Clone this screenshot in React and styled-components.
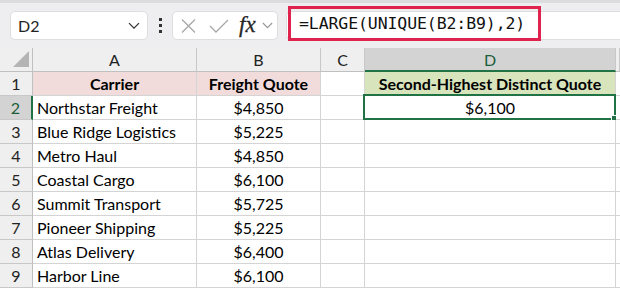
import React from 'react'
import styled, { createGlobalStyle } from 'styled-components'

const Global = createGlobalStyle`
    body {
        margin: 0;
        background: #ffffff;
        font-family: Lato, "Open Sans", sans-serif;
    }
`

const Page = styled.div`
    width: 620px;
    height: 289px;
    overflow: hidden;
    background: #ffffff;
`

const FormulaBar = styled.div`
    display: flex;
    align-items: center;
    height: 48px;
    padding: 3px 0 0 10px;
    background: #eeeef0;
    border-top: 3px solid #dcdcde;
    box-sizing: border-box;
`

const Box = styled.div`
    display: flex;
    align-items: center;
    height: 29px;
    background: #ffffff;
    border: 1px solid #dedede;
    border-radius: 5px;
    box-sizing: border-box;
    margin-top: -3px;
`

const NameBox = styled(Box)`
    width: 138px;
    padding: 0 7px 0 7px;
    justify-content: space-between;
    font-size: 16px;
    color: #222;
`

const Dots = styled.div`
    display: flex;
    flex-direction: column;
    gap: 3px;
    margin: -3px 10px 0 11px;

    span {
        display: block;
        width: 3px;
        height: 3px;
        background: #333;
    }
`

const FxBox = styled(Box)`
    width: 106px;
    padding: 0 0 0 8px;
`

const Fx = styled.span`
    font-family: "Liberation Serif", serif;
    font-style: italic;
    font-size: 23px;
    line-height: 1;
    color: #262626;
    margin: -3px 6px 0 10px;
    -webkit-text-stroke: 0.3px #262626;
`

const FormulaBox = styled(Box)`
    flex: 1;
    margin-left: 8px;
    border-radius: 5px 0 0 5px;
    border-right: none;
    position: relative;
`

const Highlight = styled.div`
    position: absolute;
    left: 1px;
    top: -6px;
    width: 253px;
    height: 35px;
    border: 3px solid #e0234e;
    box-sizing: border-box;
    display: flex;
    align-items: center;
    padding-left: 8px;
    font-family: "DejaVu Sans Mono", monospace;
    font-size: 16.5px;
    color: #111;
    letter-spacing: -0.1px;
`

const Grid = styled.div`
    display: grid;
    grid-template-columns: 33px 164px 124px 44px 251px 4px;
    grid-auto-rows: 24px;
`

const Cell = styled.div`
    box-sizing: border-box;
    border-right: 1px solid #d4d4d4;
    border-bottom: 1px solid #d4d4d4;
    display: flex;
    align-items: center;
    justify-content: ${p => p.$align || 'flex-start'};
    padding: 0 ${p => (p.$align ? '0' : '4px')};
    font-size: 16px;
    color: #000;
    background: ${p => p.$fill || '#ffffff'};
    font-weight: ${p => (p.$bold ? 700 : 400)};
    white-space: nowrap;
    position: relative;
`

const ColHead = styled.div`
    box-sizing: border-box;
    display: flex;
    align-items: center;
    justify-content: center;
    border-right: 1px solid #c8c8c8;
    border-bottom: ${p => (p.$active ? '2px solid #217346' : '1px solid #c0c0c0')};
    background: ${p => (p.$active ? '#d3d3d3' : '#efefef')};
    color: ${p => (p.$active ? '#1b5e38' : '#222')};
    font-size: 16px;
`

const RowHead = styled.div`
    box-sizing: border-box;
    display: flex;
    align-items: center;
    justify-content: center;
    border-bottom: 1px solid #c8c8c8;
    border-right: ${p => (p.$active ? '2px solid #217346' : '1px solid #c0c0c0')};
    background: ${p => (p.$active ? '#d3d3d3' : '#efefef')};
    color: ${p => (p.$active ? '#1b5e38' : '#222')};
    font-size: 16px;
`

const Corner = styled.div`
    box-sizing: border-box;
    background: #efefef;
    border-right: 1px solid #c0c0c0;
    border-bottom: 1px solid #c0c0c0;
    display: flex;
    align-items: flex-end;
    justify-content: flex-end;
    padding: 0 3px 4px 0;
`

const Selected = styled.div`
    position: absolute;
    inset: -2px -1px -1px -2px;
    border: 2px solid #217346;
    pointer-events: none;

    &::after {
        content: '';
        position: absolute;
        right: -4px;
        bottom: -4px;
        width: 5px;
        height: 5px;
        background: #217346;
        border: 1px solid #fff;
    }
`

const Chevron = ({ color = '#333', size = 12 }) => (
    <svg width={size} height={size * 0.6} viewBox="0 0 12 7">
        <path d="M1 1l5 5 5-5" fill="none" stroke={color} strokeWidth="1.3" />
    </svg>
)

const rows = [
    ['Northstar Freight', '$4,850'],
    ['Blue Ridge Logistics', '$5,225'],
    ['Metro Haul', '$4,850'],
    ['Coastal Cargo', '$6,100'],
    ['Summit Transport', '$5,725'],
    ['Pioneer Shipping', '$5,225'],
    ['Atlas Delivery', '$6,400'],
    ['Harbor Line', '$6,100'],
]

export default function App() {
    return (
        <Page>
            <Global />
            <FormulaBar>
                <NameBox>
                    <span>D2</span>
                    <Chevron />
                </NameBox>
                <Dots><span /><span /><span /></Dots>
                <FxBox>
                    <svg width="15" height="14" viewBox="0 0 15 14">
                        <path d="M1 0.5l13 13M14 0.5L1 13.5" stroke="#a8a8a8" strokeWidth="1.3" />
                    </svg>
                    <svg width="20" height="14" viewBox="0 0 20 14" style={{ marginLeft: 13 }}>
                        <path d="M1 7l6 6L19 1" fill="none" stroke="#a8a8a8" strokeWidth="1.3" />
                    </svg>
                    <Fx>fx</Fx>
                    <Chevron color="#9a9a9a" size={11} />
                </FxBox>
                <FormulaBox>
                    <Highlight>=LARGE(UNIQUE(B2:B9),2)</Highlight>
                </FormulaBox>
            </FormulaBar>
            <Grid>
                <Corner>
                    <svg width="16" height="16" viewBox="0 0 16 16">
                        <path d="M16 0V16H0Z" fill="#b4b4b4" />
                    </svg>
                </Corner>
                <ColHead>A</ColHead>
                <ColHead>B</ColHead>
                <ColHead>C</ColHead>
                <ColHead $active>D</ColHead>
                <ColHead />

                <RowHead>1</RowHead>
                <Cell $fill="#f2dcdb" $bold $align="center">Carrier</Cell>
                <Cell $fill="#f2dcdb" $bold $align="center">Freight Quote</Cell>
                <Cell />
                <Cell $fill="#d8e4bc" $bold $align="center">Second-Highest Distinct Quote</Cell>
                <Cell />

                {rows.map(([name, quote], i) => (
                    <React.Fragment key={name}>
                        <RowHead $active={i === 0}>{i + 2}</RowHead>
                        <Cell>{name}</Cell>
                        <Cell $align="center">{quote}</Cell>
                        <Cell />
                        <Cell $align="center">
                            {i === 0 && '$6,100'}
                            {i === 0 && <Selected />}
                        </Cell>
                        <Cell />
                    </React.Fragment>
                ))}
            </Grid>
        </Page>
    )
}
